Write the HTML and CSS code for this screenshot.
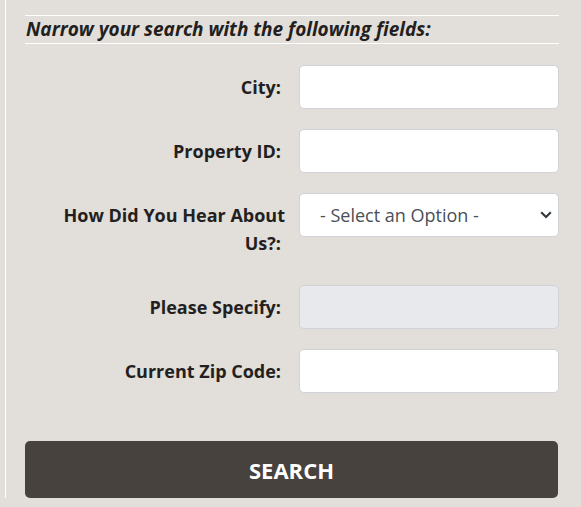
FILE: index.html
```html
<!DOCTYPE html>
<html lang="en">
<head>
<meta charset="utf-8">
<title>Search</title>
<link rel="stylesheet" href="styles.css">
</head>
<body>
<div class="panel">
  <div class="heading">Narrow your search with the following fields:</div>
  <form class="form">
    <div class="row">
      <label class="label" for="city">City:</label>
      <input class="field" id="city" type="text">
    </div>
    <div class="row">
      <label class="label" for="pid">Property ID:</label>
      <input class="field" id="pid" type="text">
    </div>
    <div class="row">
      <label class="label" for="hear">How Did You Hear About Us?:</label>
      <select class="field select" id="hear">
        <option>- Select an Option -</option>
      </select>
    </div>
    <div class="row">
      <label class="label" for="spec">Please Specify:</label>
      <input class="field" id="spec" type="text" disabled>
    </div>
    <div class="row">
      <label class="label" for="zip">Current Zip Code:</label>
      <input class="field" id="zip" type="text">
    </div>
    <button class="btn" type="button">SEARCH</button>
  </form>
</div>
</body>
</html>
```
FILE: styles.css
```css
html, body {
  margin: 0;
  padding: 0;
  background: #e2deda;
}
body {
  font-family: "Open Sans", "Noto Sans", sans-serif;
  color: #231f20;
}
.panel {
  margin-left: 5px;
  width: 554px;
  box-sizing: border-box;
  border-left: 1px solid #ffffff;
  padding: 15px 0 0 19px;
}
.heading {
  border-top: 1px solid #ffffff;
  border-bottom: 1px solid #ffffff;
  font-size: 19px;
  font-weight: 700;
  font-style: italic;
  line-height: 27px;
  padding-left: 1px;
  width: 533px;
}
.form {
  padding-top: 21px;
}
.row {
  display: grid;
  grid-template-columns: 260px 260px;
  column-gap: 14px;
  margin-bottom: 20px;
  align-items: start;
}
.label {
  text-align: right;
  font-size: 18px;
  font-weight: 700;
  line-height: 28px;
  padding: 8px 0;
}
.label::after {
  content: "";
  display: inline-block;
  width: 4px;
}
.field {
  box-sizing: border-box;
  width: 260px;
  height: 44px;
  margin: 0;
  border: 1px solid #cfd2d6;
  border-radius: 5px;
  background: #ffffff;
  font-family: "Open Sans", "Noto Sans", sans-serif;
  font-size: 18px;
  color: #495057;
  padding: 0 12px;
  outline: none;
}
.field:disabled {
  background: #e7e9ec;
}
.select {
  appearance: none;
  -webkit-appearance: none;
  padding-left: 20px;
  background-image: url("data:image/svg+xml;utf8,<svg xmlns='http://www.w3.org/2000/svg' width='12' height='8' viewBox='0 0 12 8'><path d='M1.2 1.3 L6 6 L10.8 1.3' fill='none' stroke='%23343a40' stroke-width='2.2'/></svg>");
  background-repeat: no-repeat;
  background-position: right 6px center;
  background-size: 12px 8px;
}
.btn {
  display: block;
  margin-top: 48px;
  width: 533px;
  height: 57px;
  border: none;
  border-radius: 5px;
  background: #47423e;
  color: #ffffff;
  font-family: "Open Sans", "Noto Sans", sans-serif;
  font-size: 22px;
  font-weight: 700;
  cursor: pointer;
}
```
